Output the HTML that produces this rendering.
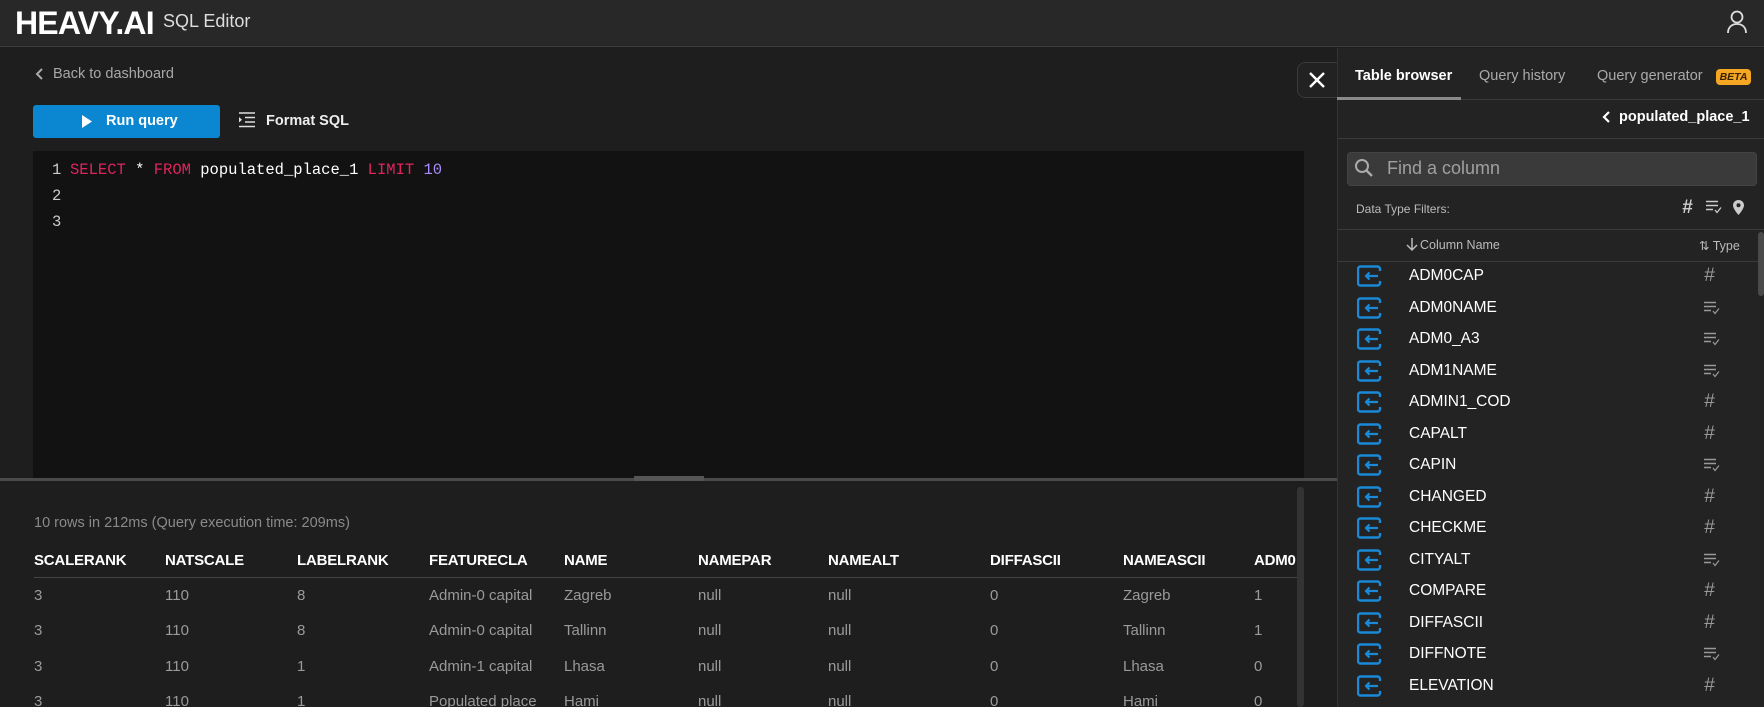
<!DOCTYPE html>
<html><head><meta charset="utf-8">
<style>
*{margin:0;padding:0;box-sizing:border-box}
body{width:1764px;height:707px;overflow:hidden;background:#1e1e1e;font-family:"Liberation Sans",sans-serif;color:#fff;position:relative}
.a{position:absolute;white-space:nowrap}
.hdr{left:0;top:0;width:1764px;height:47px;background:#282828;border-bottom:1px solid #3c3c3c}
.mono{font-family:"Liberation Mono",monospace;font-size:15.5px}
.kw{color:#e0245e}.num{color:#a78bfa}
.th{font-family:"Liberation Sans Narrow","Liberation Sans",sans-serif;font-weight:bold;font-size:15px;color:#fff;letter-spacing:-0.2px}
.td{font-family:"Liberation Sans Narrow","Liberation Sans",sans-serif;font-size:15px;color:#9a9a9a}
.rp{left:1337px;top:48px;width:427px;height:659px;background:#232323;border-left:1px solid #333}
.cn{font-family:"Liberation Sans Narrow","Liberation Sans",sans-serif;font-size:15.5px;color:#fff}
.hash{font-size:19px;color:#999}
</style></head><body>
<div class="a hdr"></div>
<div class="a" style="left:15px;top:5px;font-size:32px;font-weight:bold;letter-spacing:-0.8px;color:#fff">HEAVY.AI</div>
<div class="a" style="left:163px;top:11px;font-size:18px;color:#ddd">SQL Editor</div>
<svg class="a" style="left:1726px;top:9px" width="22" height="26" viewBox="0 0 22 26"><circle cx="11" cy="8" r="5.5" fill="none" stroke="#ddd" stroke-width="1.8"/><path d="M2 24c0-6 4-9 9-9s9 3 9 9" fill="none" stroke="#ddd" stroke-width="1.8"/></svg>

<svg class="a" style="left:34px;top:67px" width="10" height="14" viewBox="0 0 10 14"><path d="M8 2L3 7l5 5" fill="none" stroke="#aaa" stroke-width="2"/></svg>
<div class="a" style="left:53px;top:66px;font-size:14.5px;color:#a8a8a8">Back to dashboard</div>
<div class="a" style="left:33px;top:105px;width:187px;height:33px;background:#0b86d1;border-radius:3px"></div>
<svg class="a" style="left:82px;top:115px" width="10" height="13" viewBox="0 0 10 13"><path d="M0 0L10 6.5 0 13z" fill="#fff"/></svg>
<div class="a" style="left:106px;top:113px;font-size:14.5px;font-weight:bold">Run query</div>
<svg class="a" style="left:239px;top:112px" width="16" height="16" viewBox="0 0 16 16"><path d="M0 1h16M6 5.5h10M6 10h10M0 14.5h16" stroke="#ddd" stroke-width="1.6"/><path d="M0 5l3 2.8L0 10.5z" fill="#ddd"/></svg>
<div class="a" style="left:266px;top:113px;font-size:14.5px;font-weight:bold;color:#eee">Format SQL</div>

<div class="a" style="left:33px;top:151px;width:1271px;height:327px;background:#121212"></div>
<div class="a mono" style="left:52px;top:157px;line-height:26px;color:#ccc">1<br>2<br>3</div>
<div class="a mono" style="left:70px;top:157px;line-height:26px;color:#fff"><span class="kw">SELECT</span> * <span class="kw">FROM</span> populated_place_1 <span class="kw">LIMIT</span> <span class="num">10</span></div>

<div class="a" style="left:0;top:478px;width:1337px;height:3px;background:#4a4a4a"></div>
<div class="a" style="left:634px;top:476px;width:70px;height:5px;background:#555"></div>

<div class="a" style="left:34px;top:515px;font-size:14.5px;color:#8a8a8a;font-family:'Liberation Sans Narrow','Liberation Sans',sans-serif">10 rows in 212ms (Query execution time: 209ms)</div>

<div class="a" style="left:34px;top:0;width:1263px;height:707px;overflow:hidden">
<div class="a" style="left:0;top:577px;width:1263px;height:1px;background:#444"></div>
<div class="a th" style="left:0;top:552px">SCALERANK</div>
<div class="a th" style="left:131px;top:552px">NATSCALE</div>
<div class="a th" style="left:263px;top:552px">LABELRANK</div>
<div class="a th" style="left:395px;top:552px">FEATURECLA</div>
<div class="a th" style="left:530px;top:552px">NAME</div>
<div class="a th" style="left:664px;top:552px">NAMEPAR</div>
<div class="a th" style="left:794px;top:552px">NAMEALT</div>
<div class="a th" style="left:956px;top:552px">DIFFASCII</div>
<div class="a th" style="left:1089px;top:552px">NAMEASCII</div>
<div class="a th" style="left:1220px;top:552px">ADM0</div>

<div class="a td" style="left:0;top:587px">3</div><div class="a td" style="left:131px;top:587px">110</div><div class="a td" style="left:263px;top:587px">8</div><div class="a td" style="left:395px;top:587px">Admin-0 capital</div><div class="a td" style="left:530px;top:587px">Zagreb</div><div class="a td" style="left:664px;top:587px">null</div><div class="a td" style="left:794px;top:587px">null</div><div class="a td" style="left:956px;top:587px">0</div><div class="a td" style="left:1089px;top:587px">Zagreb</div><div class="a td" style="left:1220px;top:587px">1</div>

<div class="a td" style="left:0;top:622px">3</div><div class="a td" style="left:131px;top:622px">110</div><div class="a td" style="left:263px;top:622px">8</div><div class="a td" style="left:395px;top:622px">Admin-0 capital</div><div class="a td" style="left:530px;top:622px">Tallinn</div><div class="a td" style="left:664px;top:622px">null</div><div class="a td" style="left:794px;top:622px">null</div><div class="a td" style="left:956px;top:622px">0</div><div class="a td" style="left:1089px;top:622px">Tallinn</div><div class="a td" style="left:1220px;top:622px">1</div>

<div class="a td" style="left:0;top:658px">3</div><div class="a td" style="left:131px;top:658px">110</div><div class="a td" style="left:263px;top:658px">1</div><div class="a td" style="left:395px;top:658px">Admin-1 capital</div><div class="a td" style="left:530px;top:658px">Lhasa</div><div class="a td" style="left:664px;top:658px">null</div><div class="a td" style="left:794px;top:658px">null</div><div class="a td" style="left:956px;top:658px">0</div><div class="a td" style="left:1089px;top:658px">Lhasa</div><div class="a td" style="left:1220px;top:658px">0</div>

<div class="a td" style="left:0;top:693px">3</div><div class="a td" style="left:131px;top:693px">110</div><div class="a td" style="left:263px;top:693px">1</div><div class="a td" style="left:395px;top:693px">Populated place</div><div class="a td" style="left:530px;top:693px">Hami</div><div class="a td" style="left:664px;top:693px">null</div><div class="a td" style="left:794px;top:693px">null</div><div class="a td" style="left:956px;top:693px">0</div><div class="a td" style="left:1089px;top:693px">Hami</div><div class="a td" style="left:1220px;top:693px">0</div>
</div>
<div class="a" style="left:1297px;top:487px;width:7px;height:220px;background:#333;border-radius:3px"></div>

<div class="a" style="left:1297px;top:62px;width:42px;height:36px;background:#222;border:1px solid #3a3a3a;border-right:none;border-radius:8px 0 0 8px"></div>
<svg class="a" style="left:1308px;top:71px" width="18" height="18" viewBox="0 0 18 18"><path d="M2 2l14 14M16 2L2 16" stroke="#fff" stroke-width="2.4"/></svg>

<div class="a rp"></div>
<div class="a" style="left:1337px;top:99px;width:427px;height:1px;background:#3a3a3a"></div>
<div class="a" style="left:1337px;top:97px;width:124px;height:3px;background:#8a8a8a"></div>
<div class="a" style="left:1355px;top:68px;font-size:14.5px;font-weight:bold">Table browser</div>
<div class="a" style="left:1479px;top:68px;font-size:14.5px;color:#aaa">Query history</div>
<div class="a" style="left:1597px;top:68px;font-size:14.5px;color:#aaa">Query generator</div>
<div class="a" style="left:1716px;top:69px;width:35px;height:16px;background:#f5a623;border-radius:4px;font-size:10.5px;font-weight:bold;font-style:italic;color:#3a2300;text-align:center;line-height:16px">BETA</div>

<svg class="a" style="left:1601px;top:110px" width="10" height="14" viewBox="0 0 10 14"><path d="M8 2L3 7l5 5" fill="none" stroke="#fff" stroke-width="2.2"/></svg>
<div class="a" style="left:1619px;top:109px;font-size:14.5px;font-weight:bold">populated_place_1</div>
<div class="a" style="left:1337px;top:138px;width:427px;height:1px;background:#3a3a3a"></div>

<div class="a" style="left:1347px;top:152px;width:410px;height:34px;background:#3a3a3a;border-radius:4px;border:1px solid #444"></div>
<svg class="a" style="left:1354px;top:158px" width="20" height="20" viewBox="0 0 20 20"><circle cx="8" cy="8" r="6" fill="none" stroke="#aaa" stroke-width="2"/><path d="M12.5 12.5L18 18" stroke="#aaa" stroke-width="2.4"/></svg>
<div class="a" style="left:1387px;top:158px;font-size:18px;color:#a0a0a0">Find a column</div>

<div class="a" style="left:1356px;top:202px;font-size:12px;color:#bbb">Data Type Filters:</div>
<div class="a" style="left:1682px;top:197px;font-size:19px;font-weight:bold;color:#ccc;font-style:italic">#</div>
<svg class="a" style="left:1706px;top:200px" width="16" height="14" viewBox="0 0 16 14"><path d="M0 1.5h12M0 5.5h12M0 9.5h7" stroke="#ccc" stroke-width="1.6"/><path d="M9 10l2 2.5 4-5" fill="none" stroke="#ccc" stroke-width="1.3"/></svg>
<svg class="a" style="left:1733px;top:200px" width="11" height="15" viewBox="0 0 11 15"><path d="M5.5 0C2.5 0 0 2.3 0 5.3 0 9 5.5 15 5.5 15S11 9 11 5.3C11 2.3 8.5 0 5.5 0z" fill="#ccc"/><circle cx="5.5" cy="5.3" r="2" fill="#232323"/></svg>
<div class="a" style="left:1337px;top:229px;width:427px;height:1px;background:#3a3a3a"></div>

<svg class="a" style="left:1406px;top:238px" width="12" height="14" viewBox="0 0 12 14"><path d="M6 0v12M1 7l5 5 5-5" fill="none" stroke="#bbb" stroke-width="1.5"/></svg>
<div class="a" style="left:1420px;top:238px;font-size:12.5px;color:#bbb">Column Name</div>
<div class="a" style="left:1699px;top:238px;font-size:12.5px;color:#bbb">⇅ Type</div>
<div class="a" style="left:1337px;top:261px;width:421px;height:1px;background:#3a3a3a"></div>
<div class="a" style="left:1758px;top:232px;width:6px;height:64px;background:#4a4a4a;border-radius:3px"></div>

<div id="rows"></div>
<script>
var names=[["ADM0CAP",1],["ADM0NAME",0],["ADM0_A3",0],["ADM1NAME",0],["ADMIN1_COD",1],["CAPALT",1],["CAPIN",0],["CHANGED",1],["CHECKME",1],["CITYALT",0],["COMPARE",1],["DIFFASCII",1],["DIFFNOTE",0],["ELEVATION",1]];
var h="";
names.forEach(function(n,i){var c=276+i*31.5;
h+='<svg class="a" style="left:1357px;top:'+(c-11)+'px" width="25" height="22" viewBox="0 0 25 22"><path d="M23 6V4a2.5 2.5 0 0 0-2.5-2.5h-17A2.5 2.5 0 0 0 1 4v14a2.5 2.5 0 0 0 2.5 2.5h17A2.5 2.5 0 0 0 23 18v-2" fill="none" stroke="#1a8ad8" stroke-width="2.4"/><path d="M21 11H9M12.5 7.5L9 11l3.5 3.5" fill="none" stroke="#1a8ad8" stroke-width="2.2"/></svg>';
h+='<div class="a cn" style="left:1409px;top:'+(c-9)+'px">'+n[0]+'</div>';
if(n[1])h+='<div class="a hash" style="left:1704px;top:'+(c-11)+'px;font-style:italic">#</div>';
else h+='<svg class="a" style="left:1704px;top:'+(c-7)+'px" width="16" height="14" viewBox="0 0 16 14"><path d="M0 1.5h12M0 5.5h12M0 9.5h7" stroke="#999" stroke-width="1.5"/><path d="M9 10l2 2.5 4-5" fill="none" stroke="#999" stroke-width="1.2"/></svg>';
});
document.getElementById("rows").innerHTML=h;
</script>
</body></html>
